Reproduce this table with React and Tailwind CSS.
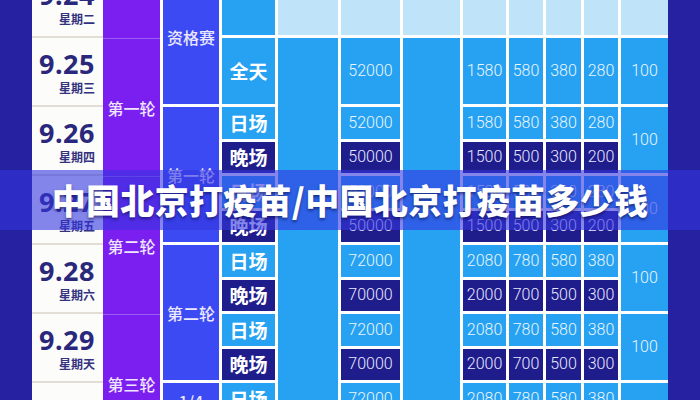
import React from 'react';

const H = { 1: 'h-[31.5px]', 2: 'h-[66px]', 4: 'h-[135px]', 12: 'h-[411px]' };

const TONE = {
  pale: 'bg-[#bfe3f9]',
  light: 'bg-[#27a2f2] text-[#eaf6ff]',
  dark: 'bg-[#1f1c8c] text-[#e9e9ff]',
  blue: 'bg-[#3c4af3] text-[#ece8ff]',
};

const DATES = [
  ['9.24', '星期二'],
  ['9.25', '星期三'],
  ['9.26', '星期四'],
  ['9.27', '星期五'],
  ['9.28', '星期六'],
  ['9.29', '星期天'],
  ['9.30', '星期一'],
];

const ROUNDS = ['', '第一轮', '第二轮', '第三轮'];

// per half-day rows after the two full-day rows
const HALF = [
  { s: '日场', t: 'light', price: '52000', p: ['1580', '580', '380', '280'] },
  { s: '晚场', t: 'dark', price: '50000', p: ['1500', '500', '300', '200'] },
  { s: '日场', t: 'light', price: '52000', p: ['1580', '580', '380', '280'] },
  { s: '晚场', t: 'dark', price: '50000', p: ['1500', '500', '300', '200'] },
  { s: '日场', t: 'light', price: '72000', p: ['2080', '780', '580', '380'] },
  { s: '晚场', t: 'dark', price: '70000', p: ['2000', '700', '500', '300'] },
  { s: '日场', t: 'light', price: '72000', p: ['2080', '780', '580', '380'] },
  { s: '晚场', t: 'dark', price: '70000', p: ['2000', '700', '500', '300'] },
  { s: '日场', t: 'light', price: '72000', p: ['2080', '780', '580', '380'] },
  { s: '晚场', t: 'dark', price: '70000', p: ['2000', '700', '500', '300'] },
];

const NUM = "font-['Roboto','Noto_Sans',sans-serif] font-light text-[16px]";
const CJK = "font-['Noto_Sans_CJK_SC',sans-serif]";

function Cell({ span = 1, tone, className = '', children }) {
  return (
    <div className={`${H[span]} ${TONE[tone]} flex shrink-0 items-center justify-center ${className}`}>
      {children}
    </div>
  );
}

function Col({ w, children }) {
  return <div className={`${w} flex shrink-0 flex-col gap-[3px]`}>{children}</div>;
}

function PriceCol({ w, i }) {
  return (
    <Col w={w}>
      <Cell span={2} tone="pale" />
      <Cell span={2} tone="light" className={NUM}>{HALF[0].p[i]}</Cell>
      {HALF.map((r, k) => (
        <Cell key={k} tone={r.t} className={NUM}>{r.p[i]}</Cell>
      ))}
    </Col>
  );
}

export default function App() {
  return (
    <div className="relative h-[400px] w-[700px] overflow-hidden bg-[#2420a0]">
      <div className="flex h-full">
        <div className="w-[32px] shrink-0 bg-[#2521a0]" />

        <div className="-mt-[31px] flex w-[636px] shrink-0 gap-[3px] self-start bg-white">
          {/* dates */}
          <div className="flex w-[71px] shrink-0 flex-col bg-[#fcfcfb]">
            {DATES.map(([d, w]) => (
              <div key={d} className="flex h-[69px] shrink-0 flex-col items-end justify-center border-b-2 border-[#e2ded6] pr-[8px] text-[#2a287c]">
                <span className="font-['Noto_Sans',sans-serif] text-[27px] font-bold leading-none tracking-[0.5px]">{d}</span>
                <span className={`${CJK} mt-[5px] text-[12px] font-bold leading-none text-[#34327f]`}>{w}</span>
              </div>
            ))}
          </div>

          {/* rounds */}
          <div className="-ml-[3px] flex w-[57px] shrink-0 flex-col bg-[#7b1ef0]">
            {ROUNDS.map((r, i) => (
              <div key={i} className={`${i === 0 ? 'h-[69px]' : 'h-[138px] border-t border-[#9a5cf2]'} flex shrink-0 items-center justify-center ${CJK} text-[16px] font-medium text-[#f0e6ff]`}>
                {r}
              </div>
            ))}
          </div>

          {/* stage */}
          <Col w="w-[56px]">
            <Cell span={4} tone="blue" className={`${CJK} text-[16px] font-medium`}>资格赛</Cell>
            <Cell span={4} tone="blue" className={`${CJK} text-[16px] font-medium`}>第一轮</Cell>
            <Cell span={4} tone="blue" className={`${CJK} text-[16px] font-medium`}>第二轮</Cell>
            <Cell span={4} tone="blue" className={`${CJK} items-start pt-[8px] text-center text-[16px] font-medium leading-[20px]`}>1/4<br />决赛</Cell>
          </Col>

          {/* session */}
          <Col w="w-[53px]">
            <Cell span={2} tone="light" className={`${CJK} items-start pt-[1px] text-[19px] font-bold text-white`}>全天</Cell>
            <Cell span={2} tone="light" className={`${CJK} text-[19px] font-bold text-white`}>全天</Cell>
            {HALF.map((r, k) => (
              <Cell key={k} tone={r.t} className={`${CJK} text-[19px] font-bold text-white`}>{r.s}</Cell>
            ))}
          </Col>

          <Col w="w-[60px]">
            <Cell span={2} tone="pale" />
            <Cell span={12} tone="light" />
          </Col>

          {/* price */}
          <Col w="w-[59px]">
            <Cell span={2} tone="pale" />
            <Cell span={2} tone="light" className={NUM}>52000</Cell>
            {HALF.map((r, k) => (
              <Cell key={k} tone={r.t} className={NUM}>{r.price}</Cell>
            ))}
          </Col>

          <Col w="w-[57px]">
            <Cell span={2} tone="pale" />
            <Cell span={12} tone="light" />
          </Col>

          <PriceCol w="w-[43px]" i={0} />
          <PriceCol w="w-[34px]" i={1} />
          <PriceCol w="w-[35px]" i={2} />
          <PriceCol w="w-[34px]" i={3} />

          <Col w="w-[47px]">
            <Cell span={2} tone="pale" />
            {[0, 1, 2, 3, 4, 5].map(k => (
              <Cell key={k} span={2} tone="light" className={NUM}>100</Cell>
            ))}
          </Col>
        </div>

        <div className="w-[32px] shrink-0 bg-[#2521a0]" />
      </div>

      {/* title banner */}
      <div className="absolute left-0 right-0 top-[170px] flex h-[60px] items-center justify-center bg-[rgba(52,53,223,0.6)]">
        <h1 className={`${CJK} text-[34px] font-black leading-none tracking-[0.3px] text-white [text-shadow:0_2px_3px_rgba(10,10,60,0.55)]`}>
          中国北京打疫苗/中国北京打疫苗多少钱
        </h1>
      </div>
    </div>
  );
}
